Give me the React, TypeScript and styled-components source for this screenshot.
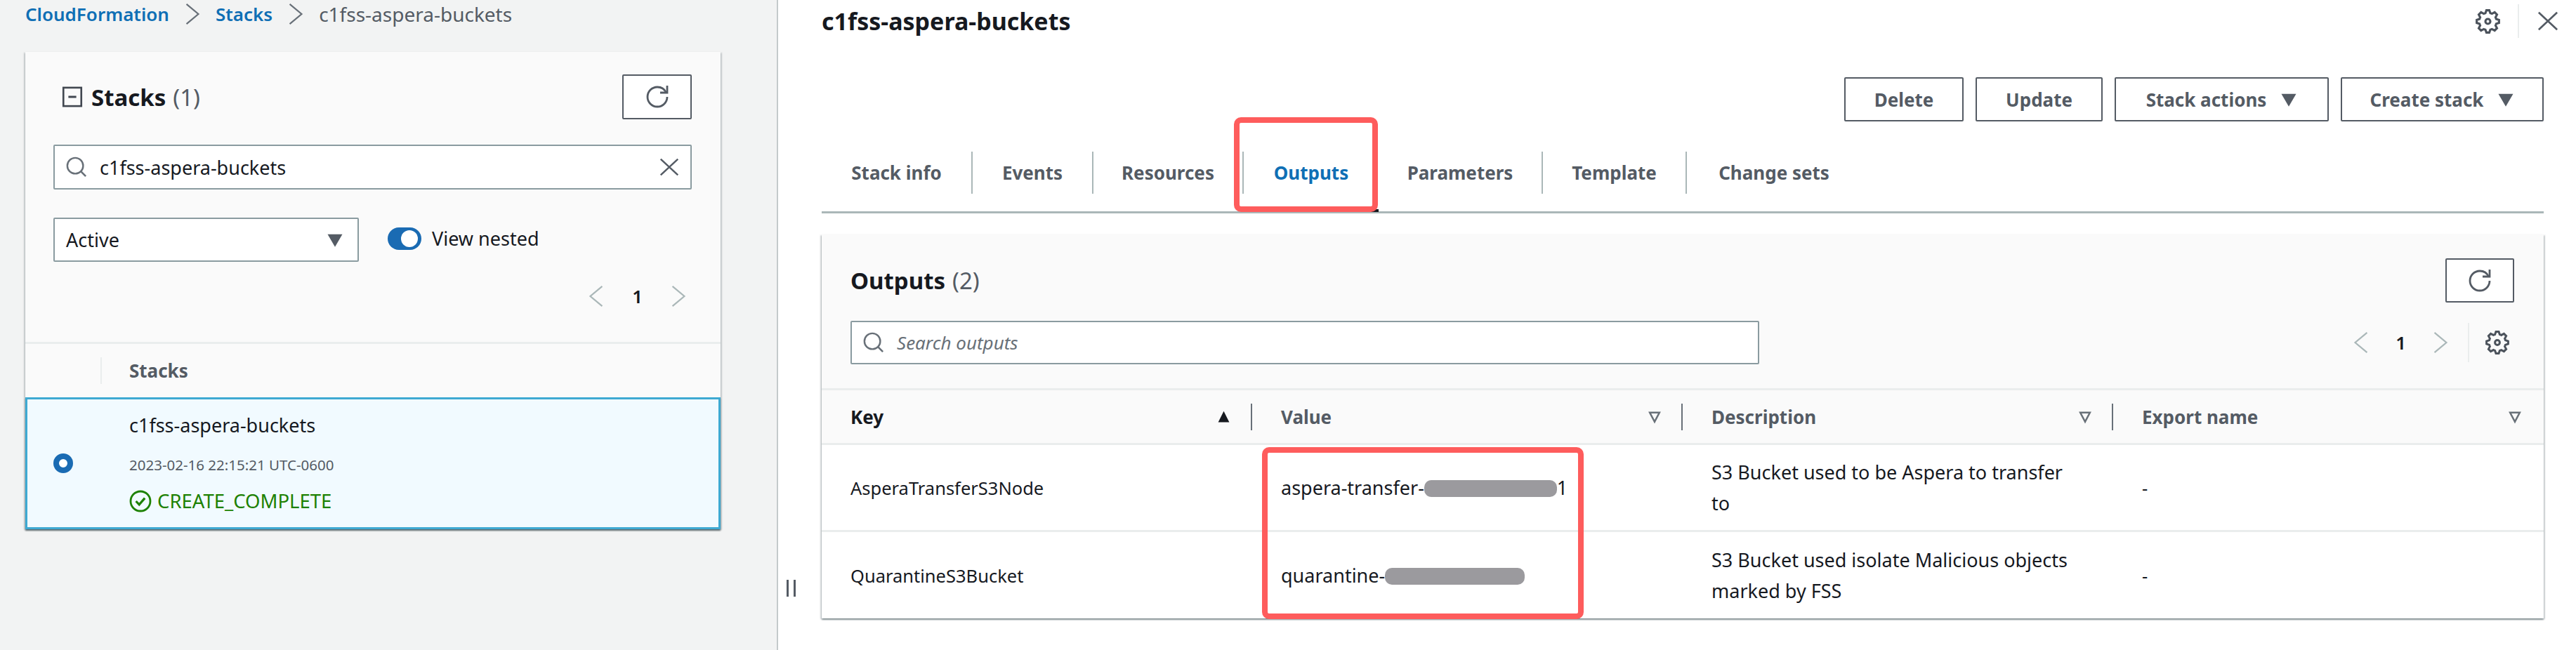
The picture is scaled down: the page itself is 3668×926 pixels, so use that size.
import React from 'react';
import styled, { createGlobalStyle } from 'styled-components';

const GlobalStyle = createGlobalStyle`
    html, body {
        margin: 0;
        padding: 0;
        background: #fff;
    }
    body {
        font-family: "Noto Sans", "Open Sans", "Liberation Sans", sans-serif;
        font-size: 26px;
        color: #16191f;
    }
    * {
        box-sizing: border-box;
    }
`;

const Page = styled.div`
    display: grid;
    grid-template-columns: 1106px 1fr;
    width: 3668px;
    height: 926px;
    overflow: hidden;
`;

const LeftPane = styled.aside`
    display: flex;
    flex-direction: column;
    background: #f2f3f3;
    padding-left: 36px;
    padding-right: 80px;
`;

const Breadcrumbs = styled.nav`
    display: flex;
    align-items: center;
    height: 40px;
    margin-bottom: 34px;
    gap: 18px;
    font-size: 28px;
    color: #545b64;
`;

const Crumb = styled.span`
    color: #0f6fb5;
    font-size: 26px;
    font-weight: 600;
`;

const Card = styled.section`
    display: flex;
    flex-direction: column;
    background: #fafafa;
    box-shadow: 0 2px 2px rgba(0, 28, 36, 0.3), 2px 1px 2px rgba(0, 28, 36, 0.15), -2px 1px 2px rgba(0, 28, 36, 0.15);
`;

const StacksTop = styled.div`
    display: flex;
    flex-direction: column;
    padding: 32px 41px 50px 40px;
`;

const TitleRow = styled.div`
    display: flex;
    align-items: center;
    justify-content: space-between;
    height: 64px;
`;

const TitleGroup = styled.div`
    display: flex;
    align-items: center;
    gap: 12px;
    padding-left: 12px;
`;

const CardTitle = styled.h2`
    margin: 0;
    font-size: 33px;
    font-weight: 700;
    color: #16191f;
    span {
        font-weight: 400;
        color: #545b64;
        margin-left: 10px;
    }
`;

const IconButton = styled.button<{ $width: number; $height: number }>`
    display: flex;
    align-items: center;
    justify-content: center;
    width: ${p => p.$width}px;
    height: ${p => p.$height}px;
    padding: 0;
    background: #fff;
    border: 2px solid #545b64;
    border-radius: 2px;
`;

const SearchBox = styled.div<{ $width?: string; $height?: number; $top?: number; $placeholder?: boolean }>`
    display: flex;
    align-items: center;
    gap: 18px;
    width: ${p => p.$width || '100%'};
    height: ${p => p.$height || 64}px;
    margin-top: ${p => p.$top || 0}px;
    padding: 0 16px;
    background: #fff;
    border: 2px solid #8a9ba0;
    border-radius: 2px;
    font-size: ${p => (p.$placeholder ? 26 : 27)}px;
    color: ${p => (p.$placeholder ? '#687078' : '#16191f')};
    font-style: ${p => (p.$placeholder ? 'italic' : 'normal')};
`;

const SearchText = styled.span`
    flex: 1;
`;

const FilterRow = styled.div`
    display: flex;
    align-items: center;
    gap: 41px;
    margin-top: 40px;
`;

const Select = styled.div`
    display: flex;
    align-items: center;
    justify-content: space-between;
    width: 435px;
    height: 63px;
    padding: 0 20px 0 16px;
    background: #fff;
    border: 2px solid #8a9ba0;
    border-radius: 2px;
    font-size: 27px;
`;

const Toggle = styled.label`
    display: flex;
    align-items: center;
    gap: 15px;
    margin-bottom: 4px;
    font-size: 27px;
`;

const ToggleTrack = styled.span`
    display: flex;
    justify-content: flex-end;
    align-items: center;
    width: 48px;
    height: 32px;
    padding: 0 5px;
    background: #1a6bb3;
    border-radius: 16px;
`;

const ToggleKnob = styled.span`
    width: 24px;
    height: 24px;
    background: #fff;
    border-radius: 50%;
`;

const Pager = styled.div`
    display: flex;
    align-items: center;
    justify-content: flex-end;
    gap: 36px;
    height: 30px;
    margin-top: 34px;
    padding-right: 4px;
    font-size: 26px;
    font-weight: 600;
`;

const StacksHead = styled.div`
    display: flex;
    align-items: center;
    height: 79px;
    border-top: 3px solid #eaeded;
    color: #545b64;
    font-weight: 700;
    font-size: 26px;
`;

const StacksHeadSep = styled.span`
    width: 2px;
    height: 38px;
    margin: 0 39px 0 107px;
    background: #eaeded;
`;

const SelectedRow = styled.div`
    display: flex;
    align-items: center;
    height: 188px;
    padding-left: 37px;
    background: #f1faff;
    border: 3px solid #3ea9d2;
    box-shadow: 0 2px 2px rgba(0, 28, 36, 0.35);
`;

const Radio = styled.span`
    width: 28px;
    height: 28px;
    margin-right: 80px;
    background: #fff;
    border: 8px solid #1a6bb3;
    border-radius: 50%;
`;

const StackInfo = styled.div`
    display: flex;
    flex-direction: column;
    padding-bottom: 3px;
`;

const StackName = styled.div`
    font-size: 27px;
    line-height: 40px;
`;

const StackDate = styled.div`
    margin-top: 21px;
    font-size: 20.5px;
    line-height: 30px;
    color: #545b64;
`;

const StackStatus = styled.div`
    display: flex;
    align-items: center;
    gap: 8px;
    margin-top: 20px;
    font-size: 27.5px;
    line-height: 34px;
    color: #1d8102;
`;

const RightPane = styled.main`
    display: flex;
    background: #fff;
    border-left: 2px solid #c4cacb;
`;

const Gutter = styled.div`
    display: flex;
    flex: 0 0 62px;
    justify-content: flex-start;
    align-items: flex-start;
    gap: 7px;
    padding: 826px 0 0 12px;
`;

const GutterBar = styled.span`
    width: 3px;
    height: 24px;
    background: #545b64;
`;

const Content = styled.div`
    display: flex;
    flex-direction: column;
    width: 2452px;
`;

const TopBar = styled.header`
    display: flex;
    align-items: center;
    height: 60px;
`;

const PageTitle = styled.h1`
    margin: 0;
    font-size: 34px;
    font-weight: 700;
`;

const TopTools = styled.div`
    display: flex;
    align-items: center;
    gap: 26px;
    margin-left: auto;
    margin-right: -21px;
`;

const TopSep = styled.span`
    width: 2px;
    height: 48px;
    background: #eaeded;
`;

const Actions = styled.div`
    display: flex;
    justify-content: flex-end;
    gap: 17px;
    margin-top: 50px;
`;

const ActionButton = styled.button<{ $width: number }>`
    display: flex;
    align-items: center;
    justify-content: center;
    gap: 20px;
    width: ${p => p.$width}px;
    height: 63px;
    padding: 0;
    background: #fff;
    border: 2px solid #545b64;
    border-radius: 2px;
    color: #545b64;
    font-family: inherit;
    font-size: 26px;
    font-weight: 700;
`;

const Tabs = styled.div`
    position: relative;
    display: flex;
    height: 131px;
    padding-top: 43px;
    border-bottom: 3px solid #aab7b8;
`;

const Tab = styled.div<{ $active?: boolean; $noSep?: boolean; $width: number }>`
    position: relative;
    display: flex;
    align-items: center;
    justify-content: center;
    width: ${p => p.$width}px;
    height: 60px;
    border-right: ${p => (p.$noSep ? 'none' : '2px solid #aab7b8')};
    color: ${p => (p.$active ? '#0f6fb5' : '#545b64')};
    font-size: 26px;
    font-weight: 700;
`;

const ActiveMark = styled.span`
    position: absolute;
    left: 0;
    right: 0;
    bottom: -26px;
    height: 4px;
    background: #16191f;
`;

const Highlight = styled.div<{ $left: number; $top: number; $width: number; $height: number }>`
    position: absolute;
    left: ${p => p.$left}px;
    top: ${p => p.$top}px;
    width: ${p => p.$width}px;
    height: ${p => p.$height}px;
    border: 8px solid #fe5c5c;
    border-radius: 10px;
    pointer-events: none;
`;

const OutputsCard = styled.section`
    position: relative;
    margin-top: 30px;
    background: #fafafa;
    box-shadow: 0 2px 2px rgba(0, 28, 36, 0.4), 2px 1px 2px rgba(0, 28, 36, 0.15), -2px 1px 2px rgba(0, 28, 36, 0.15);
`;

const OutputsTop = styled.div`
    display: flex;
    flex-direction: column;
    padding: 34px 42px 34px 41px;
`;

const OutputsTitleRow = styled(TitleRow)`
    height: 63px;
`;

const OutputsSearchRow = styled.div`
    display: flex;
    align-items: center;
    margin-top: 26px;
    height: 62px;
`;

const OutputsPager = styled.div`
    display: flex;
    align-items: center;
    gap: 34px;
    margin-left: auto;
    margin-right: 8px;
    height: 100%;
    font-size: 26px;
    font-weight: 600;
`;

const PagerSep = styled.span`
    width: 2px;
    height: 56px;
    margin-left: -10px;
    margin-right: -10px;
    background: #eaeded;
`;

const TableRow = styled.div<{ $height: number; $head?: boolean }>`
    display: grid;
    grid-template-columns: repeat(4, 613px);
    height: ${p => p.$height}px;
    border-top: 3px solid #eaeded;
    background: ${p => (p.$head ? '#fafafa' : '#fff')};
`;

const HeadCell = styled.div`
    display: flex;
    align-items: center;
    padding-left: 41px;
    color: #545b64;
    font-size: 26px;
    font-weight: 700;
`;

const HeadLabel = styled.span<{ $dark?: boolean }>`
    flex: 1;
    color: ${p => (p.$dark ? '#16191f' : '#545b64')};
`;

const ColSep = styled.span`
    width: 2px;
    height: 38px;
    margin-left: 28px;
    background: #687078;
`;

const LastGap = styled.span`
    width: 31px;
`;

const Cell = styled.div<{ $size?: number }>`
    display: flex;
    align-items: center;
    padding-left: 41px;
    font-size: ${p => p.$size || 25.5}px;
    line-height: 44px;
`;

const ValueText = styled.span`
    white-space: nowrap;
`;

const DescriptionText = styled.span`
    white-space: pre-line;
`;

const Masked = styled.span<{ $width: number }>`
    display: inline-block;
    width: ${p => p.$width}px;
    height: 24px;
    vertical-align: -3px;
    background: #9b9a9e;
    border-radius: 10px;
`;

const Line = ({ d, width = 1.4 }: { d: string; width?: number }) => (
    <path d={d} fill="none" stroke="currentColor" strokeWidth={width} />
);

const Svg = styled.svg<{ $size: number; $color?: string }>`
    flex: none;
    width: ${p => p.$size}px;
    height: ${p => p.$size}px;
    color: ${p => p.$color || '#545b64'};
    overflow: visible;
`;

const RefreshIcon = ({ size = 32 }: { size?: number }) => (
    <Svg $size={size} viewBox="0 0 16 16">
        <Line d="M10 5h5V0" />
        <Line d="M15 8a7 7 0 0 1-7 7 7 7 0 0 1-7-7 7 7 0 0 1 7-7 6.9 6.9 0 0 1 6.3 4" />
    </Svg>
);

const SearchIcon = ({ size = 30 }: { size?: number }) => (
    <Svg $size={size} $color="#687078" viewBox="0 0 16 16">
        <circle cx="7" cy="7" r="6" fill="none" stroke="currentColor" strokeWidth="1.3" />
        <Line d="m11 11 4 4" />
    </Svg>
);

const CloseIcon = ({ size = 28 }: { size?: number }) => (
    <Svg $size={size} viewBox="0 0 16 16">
        <Line d="m1 1.5 14 13M15 1.5 1 14.5" />
    </Svg>
);

const GearIcon = ({ size = 32 }: { size?: number }) => (
    <Svg $size={size} $color="#4b525b" viewBox="0 0 16 16">
        <Line width={1.5} d="M13.3 5.2l1-1.9-1.6-1.6-1.9 1c-.3-.2-.7-.3-1.1-.4L9 .3H7l-.7 2c-.4.1-.7.2-1.1.4l-1.9-1-1.6 1.6 1 1.9c-.2.3-.3.7-.4 1.1L.3 7v2l2 .7c.1.4.2.7.4 1.1l-1 1.9 1.6 1.6 1.9-1c.3.2.7.3 1.1.4l.7 2h2l.7-2c.4-.1.7-.2 1.1-.4l1.9 1 1.6-1.6-1-1.9c.2-.3.3-.7.4-1.1l2-.7V7l-2-.7c-.1-.4-.2-.8-.4-1.1z" />
        <circle cx="8" cy="8" r="1.7" fill="none" stroke="currentColor" strokeWidth="1.5" />
    </Svg>
);

const CaretDown = ({ size = 24 }: { size?: number }) => (
    <Svg $size={size} viewBox="0 0 16 16">
        <path d="M1 2.5h14l-7 12z" fill="currentColor" />
    </Svg>
);

const CaretUp = ({ size = 21 }: { size?: number }) => (
    <Svg $size={size} $color="#16191f" viewBox="0 0 16 16">
        <path d="M2 14h12L8 2z" fill="currentColor" />
    </Svg>
);

const FilterCaret = ({ size = 20 }: { size?: number }) => (
    <Svg $size={size} $color="#687078" viewBox="0 0 16 16">
        <path d="M2.5 3h11L8 13.5z" fill="none" stroke="currentColor" strokeWidth="2" />
    </Svg>
);

const Chevron = ({ dir, color = '#aab7b8', size = 30 }: { dir: 'left' | 'right'; color?: string; size?: number }) => (
    <Svg $size={size} $color={color} viewBox="0 0 16 16">
        <Line width={1.2} d={dir === 'left' ? 'M12.5.5l-9 7.5 9 7.5' : 'M3.5.5l9 7.5-9 7.5'} />
    </Svg>
);

const CollapseIcon = () => (
    <Svg $size={30} $color="#414750" viewBox="0 0 16 16">
        <rect x="1.2" y="1" width="13.6" height="14" fill="none" stroke="currentColor" strokeWidth="1.4" />
        <path d="M5 8h6" stroke="currentColor" strokeWidth="1.6" />
    </Svg>
);

const StatusIcon = () => (
    <Svg $size={32} $color="#1d8102" viewBox="0 0 16 16">
        <circle cx="8" cy="8" r="7" fill="none" stroke="currentColor" strokeWidth="1.4" />
        <path d="m4.8 8 2.3 2.4 4-4.6" fill="none" stroke="currentColor" strokeWidth="1.6" />
    </Svg>
);

const tabs = [
    { label: 'Stack info', width: 215 },
    { label: 'Events', width: 172 },
    { label: 'Resources', width: 214 },
    { label: 'Outputs', width: 192, active: true, noSep: true },
    { label: 'Parameters', width: 234 },
    { label: 'Template', width: 205 },
    { label: 'Change sets', width: 248, noSep: true },
];

const outputs = [
    {
        key: 'AsperaTransferS3Node',
        value: <>aspera-transfer-<Masked $width={189} />1</>,
        description: 'S3 Bucket used to be Aspera to transfer\nto',
        height: 124,
    },
    {
        key: 'QuarantineS3Bucket',
        value: <>quarantine-<Masked $width={199} /></>,
        description: 'S3 Bucket used isolate Malicious objects\nmarked by FSS',
        height: 126,
    },
];

const App = () => {
    return (
        <Page>
            <GlobalStyle />
            <LeftPane>
                <Breadcrumbs>
                    <Crumb>CloudFormation</Crumb>
                    <Chevron dir="right" color="#687078" />
                    <Crumb>Stacks</Crumb>
                    <Chevron dir="right" color="#687078" />
                    <span>c1fss-aspera-buckets</span>
                </Breadcrumbs>
                <Card>
                    <StacksTop>
                        <TitleRow>
                            <TitleGroup>
                                <CollapseIcon />
                                <CardTitle>Stacks<span>(1)</span></CardTitle>
                            </TitleGroup>
                            <IconButton $width={99} $height={64}><RefreshIcon /></IconButton>
                        </TitleRow>
                        <SearchBox $top={36}>
                            <SearchIcon />
                            <SearchText>c1fss-aspera-buckets</SearchText>
                            <CloseIcon />
                        </SearchBox>
                        <FilterRow>
                            <Select>
                                Active
                                <CaretDown />
                            </Select>
                            <Toggle>
                                <ToggleTrack><ToggleKnob /></ToggleTrack>
                                View nested
                            </Toggle>
                        </FilterRow>
                        <Pager>
                            <Chevron dir="left" />
                            1
                            <Chevron dir="right" />
                        </Pager>
                    </StacksTop>
                    <StacksHead>
                        <StacksHeadSep />
                        Stacks
                    </StacksHead>
                    <SelectedRow>
                        <Radio />
                        <StackInfo>
                            <StackName>c1fss-aspera-buckets</StackName>
                            <StackDate>2023-02-16 22:15:21 UTC-0600</StackDate>
                            <StackStatus>
                                <StatusIcon />
                                CREATE_COMPLETE
                            </StackStatus>
                        </StackInfo>
                    </SelectedRow>
                </Card>
            </LeftPane>
            <RightPane>
                <Gutter>
                    <GutterBar />
                    <GutterBar />
                </Gutter>
                <Content>
                    <TopBar>
                        <PageTitle>c1fss-aspera-buckets</PageTitle>
                        <TopTools>
                            <GearIcon size={33} />
                            <TopSep />
                            <CloseIcon size={30} />
                        </TopTools>
                    </TopBar>
                    <Actions>
                        <ActionButton $width={170}>Delete</ActionButton>
                        <ActionButton $width={181}>Update</ActionButton>
                        <ActionButton $width={305}>Stack actions<CaretDown /></ActionButton>
                        <ActionButton $width={289}>Create stack<CaretDown /></ActionButton>
                    </Actions>
                    <Tabs>
                        {tabs.map(tab => (
                            <Tab key={tab.label} $width={tab.width} $active={tab.active} $noSep={tab.noSep}>
                                {tab.label}
                                {tab.active && <ActiveMark />}
                            </Tab>
                        ))}
                        <Highlight $left={587} $top={-6} $width={205} $height={135} />
                    </Tabs>
                    <OutputsCard>
                        <OutputsTop>
                            <OutputsTitleRow>
                                <CardTitle>Outputs<span>(2)</span></CardTitle>
                                <IconButton $width={98} $height={63}><RefreshIcon /></IconButton>
                            </OutputsTitleRow>
                            <OutputsSearchRow>
                                <SearchBox $width="1294px" $height={62} $placeholder>
                                    <SearchIcon />
                                    <SearchText>Search outputs</SearchText>
                                </SearchBox>
                                <OutputsPager>
                                    <Chevron dir="left" />
                                    1
                                    <Chevron dir="right" />
                                    <PagerSep />
                                    <GearIcon />
                                </OutputsPager>
                            </OutputsSearchRow>
                        </OutputsTop>
                        <TableRow $head $height={78}>
                            <HeadCell>
                                <HeadLabel $dark>Key</HeadLabel>
                                <CaretUp />
                                <ColSep />
                            </HeadCell>
                            <HeadCell>
                                <HeadLabel>Value</HeadLabel>
                                <FilterCaret />
                                <ColSep />
                            </HeadCell>
                            <HeadCell>
                                <HeadLabel>Description</HeadLabel>
                                <FilterCaret />
                                <ColSep />
                            </HeadCell>
                            <HeadCell>
                                <HeadLabel>Export name</HeadLabel>
                                <FilterCaret />
                                <LastGap />
                            </HeadCell>
                        </TableRow>
                        {outputs.map(row => (
                            <TableRow key={row.key} $height={row.height}>
                                <Cell>{row.key}</Cell>
                                <Cell $size={27}><ValueText>{row.value}</ValueText></Cell>
                                <Cell $size={27}><DescriptionText>{row.description}</DescriptionText></Cell>
                                <Cell>-</Cell>
                            </TableRow>
                        ))}
                        <Highlight $left={627} $top={303} $width={458} $height={245} />
                    </OutputsCard>
                </Content>
            </RightPane>
        </Page>
    );
};

export default App;
